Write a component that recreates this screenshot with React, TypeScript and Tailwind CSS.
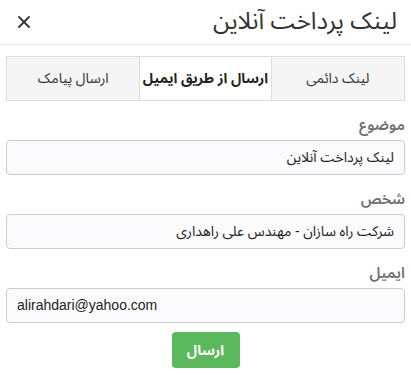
import React from "react";

function Field({ label, value, ltr }: { label: string; value: string; ltr?: boolean }) {
  return (
    <div className="mt-[14px] flex flex-col">
      <label className="mb-[5px] text-[15px] font-semibold leading-[20px] text-[#707070]">{label}</label>
      <div
        dir={ltr ? "ltr" : "rtl"}
        className={
          ltr
            ? "flex h-[35px] items-center rounded-[4px] border border-[#ccc] bg-[#fbfbfe] px-[10px] font-['Liberation_Sans',Arial,sans-serif] text-[14px] text-[#222]"
            : "flex h-[35px] items-center rounded-[4px] border border-[#ccc] bg-[#fbfbfe] px-[10px] text-[14px] text-[#222]"
        }
      >
        {value}
      </div>
    </div>
  );
}

export default function App() {
  return (
    <div dir="rtl" className="h-[375px] w-[411px] overflow-hidden bg-white font-['Noto_Sans_Arabic','DejaVu_Sans',sans-serif]">
      <div className="flex h-[45px] items-center justify-between border-b border-[#e5e5e5] pl-[18px] pr-[14px]">
        <div className="text-[24px] leading-[40px] text-[#333]">لینک پرداخت آنلاین</div>
        <svg width="12" height="12" viewBox="0 0 12 12" className="text-[#333]">
          <path d="M1 1 L11 11 M11 1 L1 11" stroke="currentColor" strokeWidth="1.8" strokeLinecap="round" />
        </svg>
      </div>
      <div className="px-[6px]">
        <div className="mt-[11px] grid h-[45px] grid-cols-3 border border-[#ddd]">
          <div className="flex items-center justify-center bg-[#f5f5f5] text-[14px] text-[#333]">لینک دائمی</div>
          <div className="flex items-center justify-center border-x border-[#ddd] bg-white text-[14px] font-bold text-[#222]">
            ارسال از طریق ایمیل
          </div>
          <div className="flex items-center justify-center bg-[#f5f5f5] text-[14px] text-[#333]">ارسال پیامک</div>
        </div>
        <Field label="موضوع" value="لینک پرداخت آنلاین" />
        <Field label="شخص" value="شرکت راه سازان - مهندس علی راهداری" />
        <Field label="ایمیل" value="alirahdari@yahoo.com" ltr />
        <div className="mt-[9px] flex justify-center">
          <button className="h-[36px] w-[68px] rounded-[4px] bg-[#5cb85c] text-[14px] font-bold text-white">ارسال</button>
        </div>
      </div>
    </div>
  );
}
